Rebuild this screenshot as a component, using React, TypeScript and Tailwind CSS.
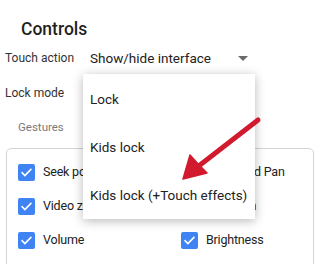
import React from "react";

function Check() {
  return (
    <div className="w-[17px] h-[17px] rounded-[2px] bg-[#3f84f2] flex items-center justify-center shrink-0">
      <svg width="13" height="13" viewBox="0 0 24 24" fill="none">
        <path d="M4 12.5l5 5L20 6.5" stroke="white" strokeWidth="3" strokeLinecap="square" />
      </svg>
    </div>
  );
}

function Item({ label, wide }: { label: string; wide?: boolean }) {
  return (
    <div className="h-[34px] flex items-center gap-[8px]">
      <Check />
      <span
        className={
          wide
            ? "text-[12.5px] tracking-[0.5px] text-[#222] whitespace-nowrap"
            : "text-[12.5px] tracking-[-0.2px] text-[#222] whitespace-nowrap"
        }
      >
        {label}
      </span>
    </div>
  );
}

export default function App() {
  return (
    <div
      className="relative w-[320px] h-[264px] overflow-hidden bg-white"
      style={{ fontFamily: "Roboto, 'Noto Sans', sans-serif" }}
    >
      <div className="pt-[20px] pl-[21px] text-[17.5px] leading-[18px] font-medium text-[#1f1f1f]">Controls</div>
      <div className="h-[40px] flex items-center pl-[5px]">
        <span className="w-[85px] text-[12px] text-[#333] whitespace-nowrap">Touch action</span>
        <div className="w-[158px] flex items-center justify-between">
          <span className="text-[13.5px] text-[#222] whitespace-nowrap">Show/hide interface</span>
          <svg width="10" height="5" viewBox="0 0 10 5">
            <path d="M0 0h10L5 5z" fill="#6b6b6b" />
          </svg>
        </div>
      </div>
      <div className="h-[30px] flex items-center pl-[5px]">
        <span className="text-[12px] text-[#333]">Lock mode</span>
      </div>
      <div className="h-[40px] flex items-center pl-[18px]">
        <span className="text-[11.5px] text-[#7a7a7a]">Gestures</span>
      </div>
      <div className="ml-[6px] w-[308px] h-[150px] rounded-[5px] border border-[#d4d4d4] pt-[6px] pl-[11px] grid grid-cols-[163px_1fr] content-start">
        <Item label="Seek position" />
        <Item label="Zoom and Pan" />
        <Item label="Video zoom" />
        <Item label="Rotation" wide />
        <Item label="Volume" />
        <Item label="Brightness" />
      </div>

      <div className="absolute left-[83px] top-[74px] w-[172px] bg-white pt-[1px] shadow-[0_2px_10px_rgba(0,0,0,0.28)]">
        {["Lock", "Kids lock", "Kids lock (+Touch effects)"].map((t) => (
          <div key={t} className="h-[48px] flex items-center pl-[7px] text-[13.5px] text-[#222] whitespace-nowrap">
            {t}
          </div>
        ))}
      </div>

      <svg className="absolute left-0 top-0" width="320" height="264" viewBox="0 0 320 264">
        <path d="M258 120L200 165" stroke="#d11a2e" strokeWidth="5" strokeLinecap="round" />
        <path d="M183 179L190 155Q196 162 207 173Z" fill="#d11a2e" stroke="#d11a2e" strokeWidth="1.5" strokeLinejoin="round" />
      </svg>
    </div>
  );
}
